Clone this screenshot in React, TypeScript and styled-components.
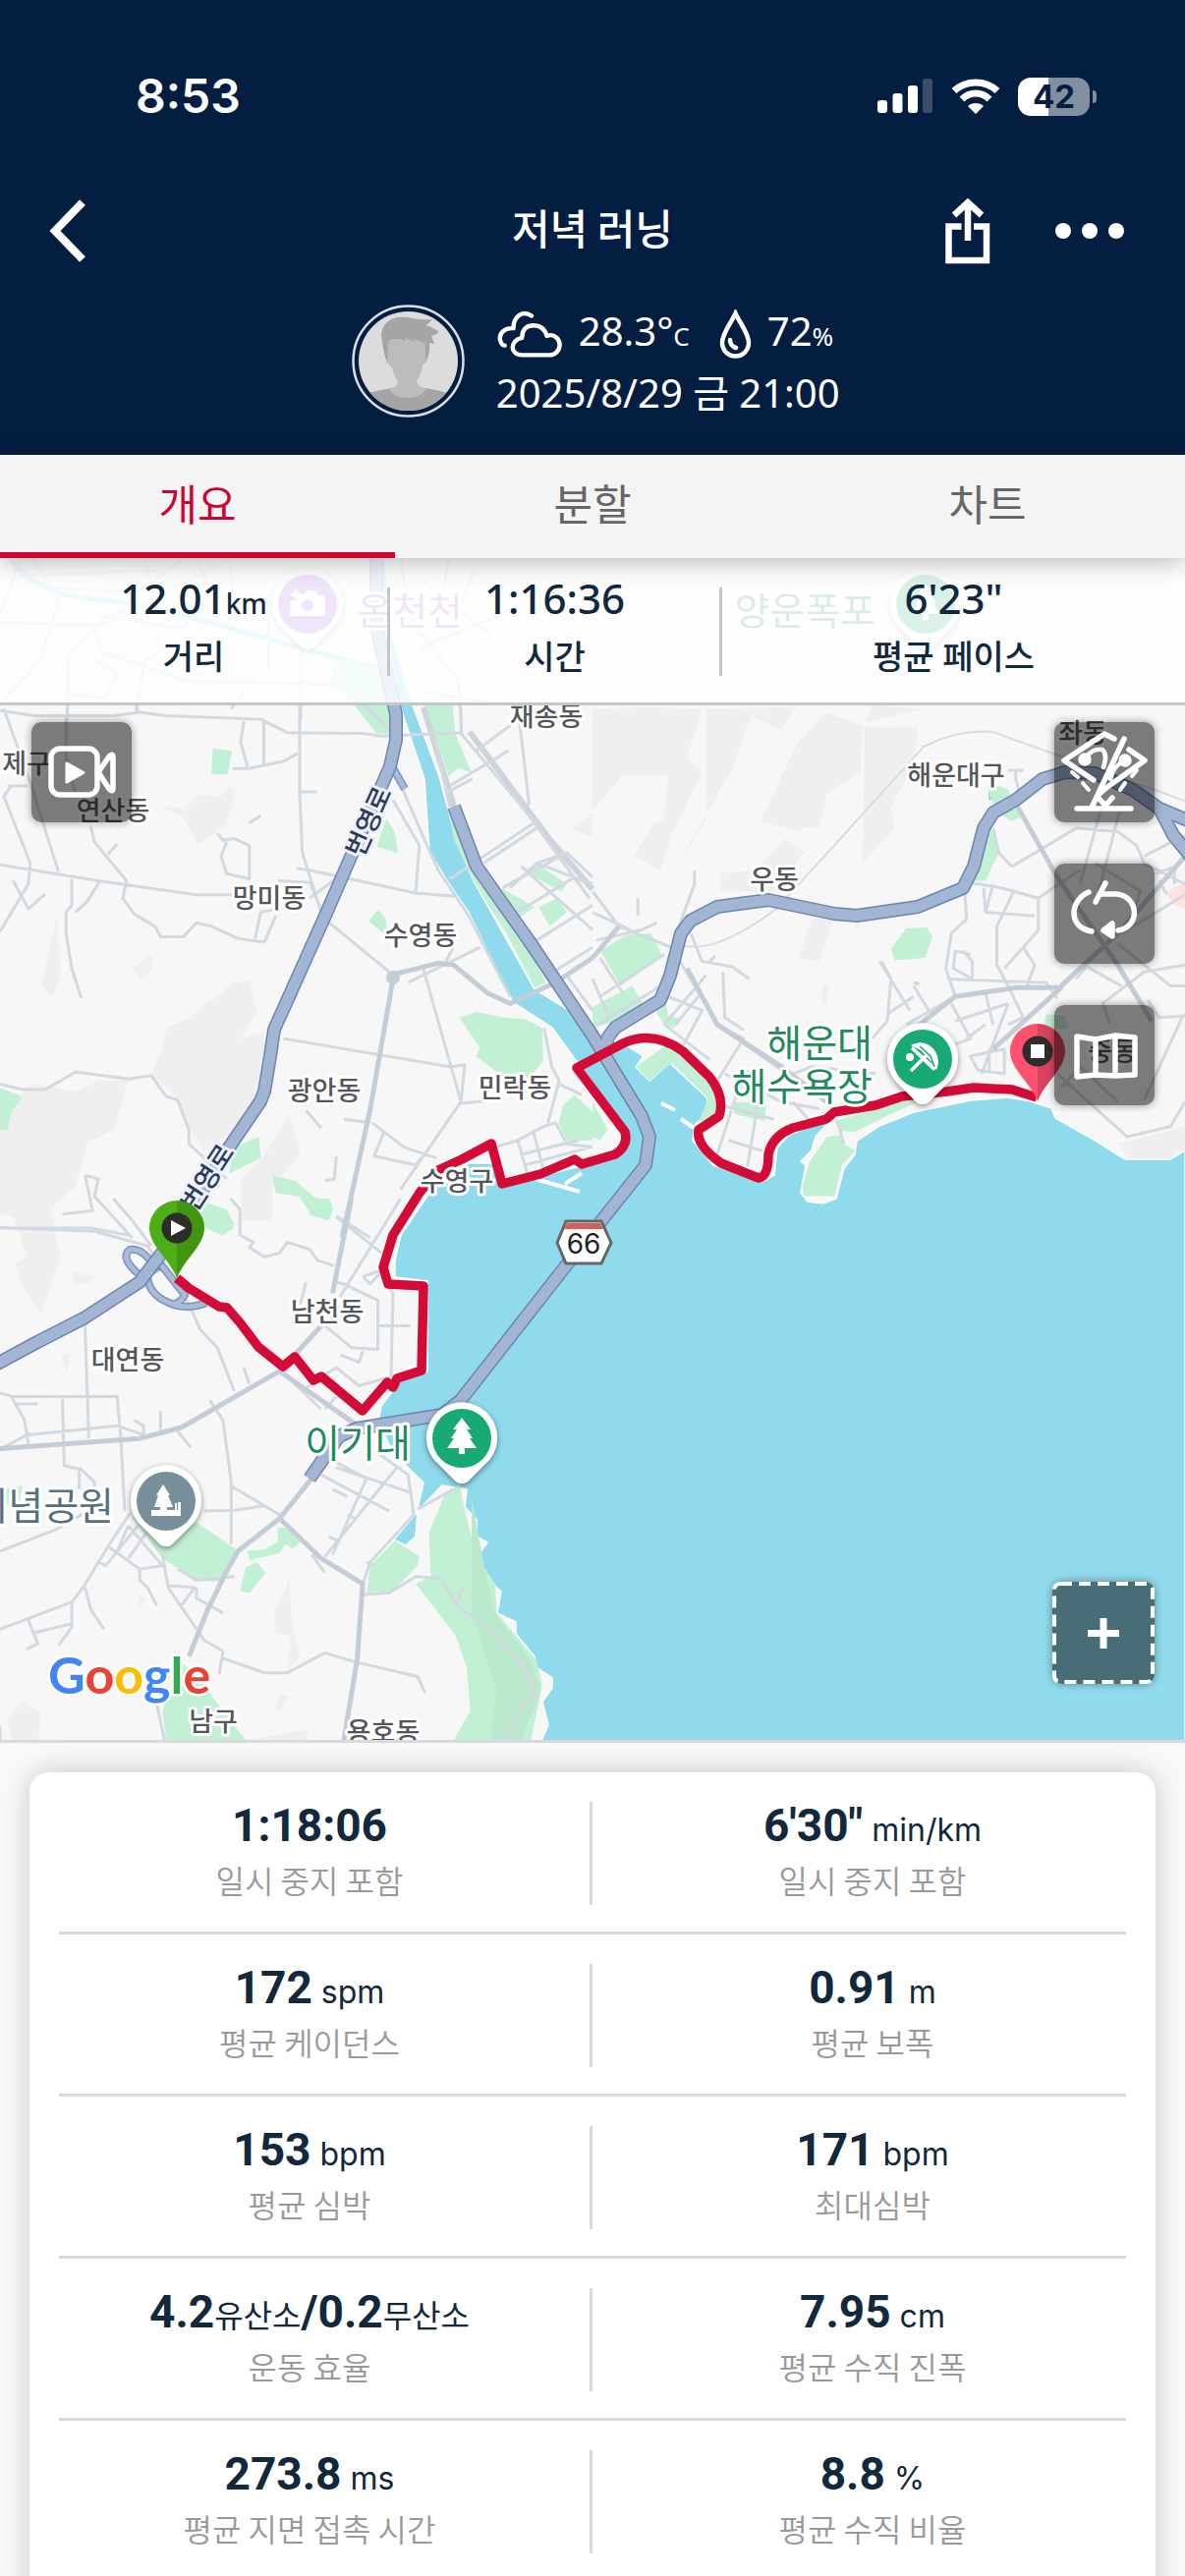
import React from "react";
import styled, { createGlobalStyle, css } from "styled-components";

const GlobalStyle = createGlobalStyle`
  *, *::before, *::after { box-sizing: border-box; }
  body {
    margin: 0;
    background: #f9f9f9;
    color: #12283c;
    font-family: "Noto Sans", "Noto Sans CJK KR", sans-serif;
  }
  button { font: inherit; color: inherit; border: 0; padding: 0; background: none; cursor: pointer; }
  h1, dl, dt, dd, p { margin: 0; font-weight: inherit; font-size: inherit; }
`;

const Screen = styled.div`
  display: flex;
  flex-direction: column;
  height: 100vh;
  overflow: hidden;
`;

/* ---------- header ---------- */

const Header = styled.header`
  flex: none;
  background: #041e42;
  color: #fff;
  padding-bottom: 38px;
`;

const StatusBar = styled.div`
  display: flex;
  align-items: center;
  justify-content: space-between;
  padding: 78px 90px 0 138px;
  height: 118px;
`;

const Clock = styled.time`
  font: 600 48px/40px Inter, sans-serif;
`;

const StatusIcons = styled.div`
  display: flex;
  align-items: center;
  gap: 18px;
`;

const Battery = styled.div`
  display: flex;
  align-items: center;
  gap: 3px;
`;

const BatteryBody = styled.div`
  width: 73px;
  height: 39px;
  border-radius: 13px;
  background: linear-gradient(90deg, #fff 42%, #828fa1 42%);
  color: #041e42;
  font: 700 33px/39px Inter, sans-serif;
  text-align: center;
`;

const BatteryCap = styled.div`
  width: 4px;
  height: 13px;
  border-radius: 0 6px 6px 0;
  background: #828fa1;
`;

const NavBar = styled.nav`
  display: grid;
  grid-template-columns: 1fr auto 1fr;
  align-items: center;
  height: 100px;
  margin-top: 67px;
  padding: 0 50px;
`;

const Title = styled.h1`
  font: 500 42px/60px "Noto Sans CJK KR", sans-serif;
  padding-bottom: 8px;
`;

const NavActions = styled.div`
  display: flex;
  justify-content: flex-end;
  align-items: center;
  gap: 66px;
  padding-right: 12px;
`;

const IconButton = styled.button`
  display: flex;
  justify-self: start;
`;

const Meta = styled.div`
  display: flex;
  justify-content: center;
  align-items: center;
  gap: 32px;
  height: 115px;
  margin-top: 25px;
  padding-left: 14px;
`;

const MetaLines = styled.div`
  display: flex;
  flex-direction: column;
  font-size: 40px;
  line-height: 60px;
  padding-top: 4px;
`;

const Weather = styled.div`
  display: flex;
  align-items: center;
  gap: 16px;
  height: 60px;
`;

const Reading = styled.span`
  margin-right: 14px;
  small { font-size: 26px; }
`;

const Started = styled.time`
  display: block;
  height: 60px;
`;

/* ---------- tabs ---------- */

const Tabs = styled.div`
  flex: none;
  display: flex;
  position: relative;
  z-index: 2;
  background: #f4f4f4;
  box-shadow: 0 4px 24px rgba(0, 0, 0, 0.28);
`;

const Tab = styled.button<{ $active?: boolean }>`
  flex: 1;
  height: 105px;
  padding-bottom: 4px;
  font: 400 43px/60px "Noto Sans CJK KR", sans-serif;
  color: ${(p) => (p.$active ? "#cc0633" : "#666")};
  border-bottom: 6px solid ${(p) => (p.$active ? "#cc0633" : "transparent")};
`;

/* ---------- map ---------- */

const MapArea = styled.section`
  flex: none;
  position: relative;
  aspect-ratio: 1206 / 1206;
  overflow: hidden;
  border-bottom: 3px solid #d8dadb;
`;

const MapSvg = styled.svg`
  display: block;
  width: 100%;
  height: 100%;
`;

const Summary = styled.dl`
  position: absolute;
  inset: 0 0 auto;
  display: grid;
  grid-template-columns: 197fr 169fr 237fr;
  padding: 30px 0 27px;
  background: rgba(255, 255, 255, 0.84);
  border-bottom: 3px solid #c6c6c6;
`;

const SummaryItem = styled.div`
  display: flex;
  flex-direction: column-reverse;
  justify-content: flex-end;
  align-items: center;
  height: 90px;
  & + & { border-left: 3px solid #c6c6c6; }
  dt { font-size: 34px; line-height: 44px; font-weight: 500; margin-top: 14px; }
  dd { height: 46px; font-size: 42px; line-height: 46px; font-weight: 500; margin-top: -12px; }
  small { font-size: 28px; }
`;

const MapTools = styled.div<{ $side: "left" | "right" }>`
  position: absolute;
  top: 167px;
  ${(p) => (p.$side === "left" ? css`left: 32px;` : css`right: 31px;`)}
  display: flex;
  flex-direction: column;
  gap: 42px;
`;

const MapButton = styled.button`
  display: block;
  width: 102px;
  height: 102px;
  border-radius: 10px;
  background: rgba(0, 0, 0, 0.5);
  box-shadow: 0 0 8px rgba(0, 0, 0, 0.4);
`;

const AddButton = styled(MapButton)`
  position: absolute;
  right: 31px;
  bottom: 57px;
  width: 104px;
  height: 104px;
`;

/* ---------- statistics ---------- */

const Card = styled.section`
  flex: none;
  margin: 30px 30px 0;
  padding-bottom: 30px;
  border-radius: 20px;
  background: #fff;
  box-shadow: 0 0 30px rgba(0, 0, 0, 0.2);
`;

const StatRow = styled.dl`
  display: grid;
  grid-template-columns: 1fr 1fr;
  margin: 0 30px;
  padding: 30px 0 27px;
  & + & { border-top: 3px solid #d9d9d9; }
`;

const Stat = styled.div`
  display: flex;
  flex-direction: column-reverse;
  justify-content: flex-end;
  align-items: center;
  height: 105px;
  &:first-child { padding-right: 30px; border-right: 3px solid #d9d9d9; }
  &:last-child { padding-left: 27px; }
  dt { font: 350 32px/44px "Noto Sans CJK KR", sans-serif; margin-top: 9px; color: #999; }
  dd { height: 48px; font: 700 46px/48px Roboto, "Noto Sans CJK KR", sans-serif; }
`;

const Unit = styled.small`
  font: 400 32px/48px Inter, "Noto Sans CJK KR", sans-serif;
`;

/* ---------- icons ---------- */

const Signal = () => (
  <svg width="57" height="36" viewBox="0 0 57 36" fill="#fff" aria-hidden="true">
    <rect x="0" y="22" width="10" height="13" rx="3" />
    <rect x="15.500" y="15" width="10" height="20" rx="3" />
    <rect x="31" y="7" width="10" height="28" rx="3" />
    <rect x="46" y="0" width="10" height="35" rx="3" opacity=".22" />
  </svg>
);

const Wifi = () => (
  <svg width="50" height="36" viewBox="0 0 50 36" aria-hidden="true">
    <g fill="none" stroke="#fff" strokeWidth="7">
      <path d="M3 12.500C15 1 35 1 47 12.500" />
      <path d="M11 21C19 13 31 13 39 21" />
    </g>
    <path d="M17 28C21 24 29 24 33 28L25 36Z" fill="#fff" />
  </svg>
);

const Share = () => (
  <svg width="46" height="67" viewBox="0 0 46 67" fill="none" stroke="#fff" strokeWidth="6.500" aria-hidden="true">
    <path d="M16.500 28.500H3.500V63H42V28.500H29" />
    <path d="M23 43V4M9 17L23 4L37 17" />
  </svg>
);

const Dots = () => (
  <svg width="70" height="16" viewBox="0 0 70 16" fill="#fff" aria-hidden="true">
    <circle cx="8" cy="8" r="8" />
    <circle cx="35" cy="8" r="8" />
    <circle cx="62" cy="8" r="8" />
  </svg>
);

const Back = () => (
  <svg width="38" height="64" viewBox="0 0 38 64" fill="none" stroke="#fff" strokeWidth="8" aria-hidden="true">
    <path d="M34 3L6 32L34 61" />
  </svg>
);

const Cloud = () => (
  <svg width="68" height="50" viewBox="0 0 70 50" fill="none" stroke="#fff" strokeWidth="4.500" strokeLinecap="round" strokeLinejoin="round" aria-hidden="true">
    <path d="M37 6C29 0 18 5 18 19C8 18 3 25 4 31C5 35 7 37 9 37" />
    <path d="M27 47C14 47 14 31 27 29C27 19 33 16 39 16C47 16 51 20 53 27C60 24 66.500 30 66.500 36C66.500 43 61 47 56 47Z" />
  </svg>
);

const Drop = () => (
  <svg width="33" height="50" viewBox="0 0 33 50" fill="none" stroke="#fff" strokeWidth="4.500" strokeLinecap="round" aria-hidden="true">
    <path d="M16.500 4C21 14 30 24 30 34A13.500 13.500 0 0 1 3 34C3 24 12 14 16.500 4Z" />
    <path d="M11 31Q11 37 17 39" />
  </svg>
);

const Avatar = () => (
  <svg width="115" height="115" viewBox="0 0 115 115" role="img" aria-label="프로필">
    <clipPath id="face"><circle cx="57.500" cy="57.500" r="50.500" /></clipPath>
    <circle cx="57.500" cy="57.500" r="56" fill="none" stroke="#dcdfe6" strokeWidth="2.500" />
    <g clipPath="url(#face)">
      <rect width="115" height="115" fill="#dcdcdc" />
      <path d="M0 115V95Q20 88 47 84H68Q95 88 115 95V115Z" fill="#a5a5a5" />
      <path d="M38 86Q47 84 47 76H66Q66 84 76 86Q70 95 57 95Q44 95 38 86Z" fill="#bcbcbc" />
      <path d="M36 59Q32 50 30 30Q31 20 40 15Q48 11 62 14Q72 16 82 15Q79 19 75 21Q84 24 89 28Q85 31 81 32L84 40L79 39Q80 50 75 59Z" fill="#a5a5a5" />
      <path d="M37 37Q48 32 55 38L54 34L64 38L63 35Q72 38 75 40L75 58L72 62Q70 76 62 82H52Q43 76 41 64Q36 60 36 55Z" fill="#bcbcbc" />
    </g>
  </svg>
);

const ToolIcon = ({ children }: { children: React.ReactNode }) => (
  <svg width="102" height="102" viewBox="0 0 102 102" fill="none" stroke="#fff" strokeWidth="5.500" strokeLinecap="round" strokeLinejoin="round" aria-hidden="true">
    {children}
  </svg>
);

const VideoIcon = () => (
  <ToolIcon>
    <rect x="20" y="27" width="47" height="47" rx="9" />
    <path d="M36 42V61L53 51.500Z" fill="#fff" strokeWidth="3" />
    <path d="M68 51L79 35Q83 31 83 36V67Q83 72 79 68Z" />
  </ToolIcon>
);

const No3dIcon = () => (
  <ToolIcon>
    <path d="M61 17L51 12L10 39L40 59" />
    <path d="M76 28L92 39L54 66L46 73" />
    <path d="M71 17L38 87M23 88H78M44 76L52 85L59 77" />
    <path d="M29 62L35 69M72 62L67 69M18 51L24 56M84 49L79 55" strokeWidth="4" />
    <path d="M32 36C38 28 44 27 49 28C54 33 52 40 50 46" strokeWidth="4.500" />
    <path d="M72 39Q60 44 57 58" strokeWidth="4.500" />
    <circle cx="31" cy="38" r="4" fill="#fff" />
    <circle cx="72" cy="39" r="4" fill="#fff" />
  </ToolIcon>
);

const LoopIcon = () => (
  <ToolIcon>
    <path d="M35 29C16 37 13 65 38 69" />
    <path d="M52 20L42 39M46 31H64C86 34 88 64 65 68" />
    <path d="M50 68L59 61V74Z" fill="#fff" />
  </ToolIcon>
);

const FoldedMapIcon = () => (
  <ToolIcon>
    <path d="M23 32L42 35L62 31L82 33V71L62 72L42 71L23 73ZM42 35V71M62 31V72" />
  </ToolIcon>
);

const PlusIcon = () => (
  <svg width="104" height="104" viewBox="0 0 104 104" fill="none" stroke="#fff" aria-hidden="true">
    <rect x="2" y="2" width="100" height="100" rx="6" strokeWidth="4" strokeDasharray="12 7" />
    <path d="M52 37V68M36 52.500H68" strokeWidth="7" />
  </svg>
);

/* ---------- map drawing ---------- */

/* The map is stored in sheets, each with its own origin and grid size. */
const sheets = {
  n: "translate(0 560) scale(.33333)",
  nw: "translate(0 700) scale(.38457 .35714)",
  ne: "translate(603 700) scale(.38457 .35714)",
  sw: "translate(0 1220) scale(.38457 .3699)",
};
type SheetName = keyof typeof sheets;

const terrain: Record<SheetName, string> = {
  n: "M490 780L560 815L605 900L690 840L720 730L700 725L670 755L605 745L560 790Z",
  nw: "M440 970L500 940L620 840L660 835L680 920L640 1000L700 980L690 1160L620 1260L540 1320L500 1250L460 1160L400 1100L430 1030ZM110 850L150 650L160 820L140 880ZM350 800L400 755L405 800L375 835ZM20 1200L80 1130L200 1150L260 1120L340 1120L300 1260L230 1300L200 1420L100 1520L0 1500V1220ZM700 1330L765 1220L795 1330L720 1420V1520H640V1400ZM1510 400L1568 360V430Z",
  ne: "M0 60L150 55L290 60L250 200L290 240L210 420L180 520L110 480L160 390L190 370L200 250L80 250L0 350ZM300 60L540 55L500 120L420 80L370 230L280 400L220 510L300 380ZM540 160L620 70L715 110L710 240L620 300L600 400L560 400L540 410L445 380ZM720 110L860 110L850 220L790 340L800 400L715 500ZM340 530L430 520L510 430L560 470L480 580H340ZM740 50L880 60L720 100ZM580 660L640 650L600 780L545 770ZM610 845L628 850L620 905L605 900ZM1390 1300L1568 1250V1320L1520 1343H1420Z",
  sw: "M20 0L130 10L160 160L110 320L60 240L40 180L70 160ZM160 430L182 430L178 480ZM190 200L250 215L240 230L195 240ZM725 1140L765 1050L775 1190L795 1260L760 1300L770 1205L730 1195ZM365 1090L388 1100L370 1125ZM740 1360L765 1370L740 1410L728 1405ZM20 1430L60 1380L110 1420L100 1490H30ZM650 1490L815 1460V1490Z",
};

const parks: Record<SheetName, string> = {
  n: "M1020 330L1180 360L1205 470L1190 560H1150L1080 470L1010 400ZM1290 450L1380 455L1390 560L1440 680L1400 665L1370 690L1340 600L1310 560ZM650 606L708 612L695 685H645ZM1180 820L1205 860L1215 925L1150 905Z",
  nw: "M1215 940L1260 925L1340 940L1390 945L1435 970L1437 1065L1390 1125L1320 1100L1260 1050L1270 1025ZM975 665L1000 632L1020 655L1025 710ZM1190 350L1320 580L1445 840L1415 855L1340 700L1250 545L1200 430ZM1325 570L1415 625L1375 655ZM1420 500L1500 560L1485 582L1390 525ZM1425 625L1475 600L1500 640L1455 680ZM620 1310L685 1280L690 1340L605 1385ZM720 1390L780 1405L830 1450L880 1470L870 1515L825 1500L790 1450L730 1440ZM540 1470L600 1490L620 1540L590 1560L520 1530ZM1490 1190L1520 1160L1568 1210V1290L1500 1290L1478 1240ZM0 1140L60 1165L30 1210L20 1260H0Z",
  ne: "M20 750L90 705L155 700L185 765L75 850ZM0 910L105 850L135 900L60 950L0 970ZM150 895L195 900L200 935L235 945L215 970L190 960ZM830 685L885 683L900 710L880 770L800 777L790 745ZM1050 270L1100 290L1115 320L1060 330L1045 290ZM1055 400L1075 470L1040 550L1005 550ZM1090 350L1135 345L1130 370L1110 380L1085 365ZM0 1180L40 1260L20 1290L0 1280ZM115 1080L200 1015L240 1045L310 1110L335 1215L280 1240L305 1170L210 1070L150 1120ZM375 1180L460 1185L455 1235L375 1215ZM640 1235L760 1200L830 1170L860 1180L760 1230L690 1268L655 1260ZM620 1280L660 1275L665 1300L695 1320L660 1360L640 1450L560 1448L555 1420L575 1350ZM1200 930L1250 935L1260 970L1225 975L1190 985Z",
  sw: "M520 890L625 965L590 1055L520 1050L430 990L345 870L380 900ZM655 970L700 965L735 945V905H760L795 945L775 965L755 950L740 975L660 995ZM650 1015L680 1000L703 1030L660 1085L635 1080ZM1045 940L1110 985L1105 1010L1040 1080L970 1085L980 1010ZM1215 785L1235 880L1260 980L1310 1060L1315 1140L1420 1270L1435 1340L1405 1490H1200L1245 1410L1235 1290L1205 1200L1100 1060L1140 1040L1135 920L1175 820ZM430 1410L480 1280L520 1300L575 1390L650 1490H440ZM810 0H870L882 30L870 60L820 45ZM545 10L600 30L620 70L590 95L540 80ZM0 800L60 790L50 840H0Z",
};

const minorRoads: Record<SheetName, string> = {
  n: "M0 220L300 230L700 30M60 30L0 200M100 24L180 160L120 340L0 470M300 230L210 320L205 520M290 230L310 310L570 400L1050 410L1200 560M440 24L480 160L300 210M600 24L640 130L900 180M470 260L500 300L440 340L415 490M720 210L700 24M820 180V360M918 300V520M1220 24L1260 220L1400 400L1410 560M1300 100L1500 260M1340 440L1520 470M1280 300L1568 180M750 430L705 485M640 130L560 240L310 200M60 80L500 60M100 110L420 130L560 24M210 440L320 450L360 380L280 330M1370 24L1340 200M1450 60L1400 180",
  nw: "M0 65L90 80H300L370 70L440 80L690 90L760 128L960 130L1010 138L1220 128M175 80V200L200 300M10 60L80 270L155 525M363 50V70M645 95L637 155L655 225M698 95V222M615 230H660L750 210L787 188M793 50V300L800 470L850 640M795 297H838M240 395L250 440L335 550L325 600L355 645L410 680L425 710H485L520 670L560 680L630 715L700 725L730 650M285 475L310 445M660 385L690 365M575 415L590 435L620 430L660 450V545L600 530L585 480L600 440M0 505L260 550L520 590H615M20 280H70L30 280L10 310L80 500L75 560L0 695M190 545V620L175 640V700L190 800L215 885M265 550L230 610L200 640M120 588L75 630L35 550M675 715L690 640L735 630M735 550L820 555M785 515L820 520L1100 585L1210 595M820 555L860 660L1030 810M925 515L820 600M1050 250L1130 450L1160 520L1240 650L1350 880M1110 450L1100 580M1040 320L1110 450M1220 55V130L1390 350L1560 600M1150 140L1190 340M1370 50L1400 330L1380 345M1345 180L1190 280M1420 380L1190 545M1250 260L1180 300M1260 180L1360 100M1280 500L1420 400M1330 570L1500 470M1370 640L1520 540M1420 720L1568 620M1450 820L1568 740M1350 570L1420 500L1568 560M1380 510L1568 690M1420 500L1500 470L1568 540M1080 840L1270 740M1120 800L1220 1180L1230 1075L1190 1080L750 1000M1220 1180L1060 1430M1220 1185L1300 1175M1200 740L1180 780M985 1240L1070 1310L1155 1340M1015 1270L990 1335L1100 1360L1115 1340M910 1230L980 1240M810 1205L850 1255M890 1335L885 1400L860 1405M890 1505L980 1568M0 1130L60 1145H120L200 1095L340 1115L400 1105L440 1165L470 1175L500 1260V1300L600 1400M0 1540H240L340 1560M225 1390L260 1400L250 1450L350 1568M225 1390L245 1490L165 1500M1310 1310L1370 1290L1440 1250L1470 1240L1500 1300L1568 1310M1370 1290L1400 1400M1410 1260L1440 1380M1380 1330L1530 1290M1390 1360L1560 1310M1440 970L1460 1080L1480 1120L1450 1240M1480 1130L1540 1160M1500 900L1568 980M1500 820L1568 920",
  ne: "M0 580L70 680L210 740L330 960L500 1090M0 640L100 690M10 720L130 690L170 670M0 830L40 930M20 770L80 870M120 600V650M270 520V560L225 690M260 700L290 780L370 795L415 830M310 780L325 765M345 810L350 940L400 975M200 880L290 920L240 1020M300 820L190 960L310 1060M280 880L220 960M210 830L0 970M190 760L20 880M330 1120L400 1000L330 960M350 1100L500 1180L600 1200M410 1090L375 1180L330 1330M340 1190L480 1230M360 1290L450 1320M440 1170L410 1365M510 1110L580 1080L750 1100M650 1240L665 1300M530 1180L580 1240M765 780L790 830L780 950L740 1000M760 780L840 920M850 850L890 920M850 840L865 845M780 930L850 880M830 960L960 880M940 830L1060 835L1200 840L1230 885M1000 760L960 750L955 800L1005 830V780L980 750M1000 555L1080 570L1180 600L1220 570L1290 520M985 580L990 660L950 700L935 800L960 880M1060 560L1040 640L1170 650M1115 580L1070 680V790L1100 850M1180 600V690L1140 740L1090 800M1040 640L1035 570M1140 740L1170 790L1150 850M1110 510L1280 400L1390 410L1440 450L1460 500L1568 560M1060 400L1075 470L1110 510M1350 330L1290 560M1400 330L1340 580M1120 235V260L1130 300M1100 235H1140M1460 480L1568 420M1400 700L1568 590M1390 730L1530 850L1568 850M1330 500L1450 580L1420 680M1370 960L1350 900L1460 810L1568 790M1560 940L1460 1175M1470 890L1500 940L1568 935M950 900L1000 1000L950 1020M960 950L1100 900M990 1000L1040 960M1040 870L1060 960M1100 850L1140 940L1100 960M1000 1050L1090 1030V1100L1020 1090ZM1050 1030V1100M1230 1100L1415 1280L1530 1250L1568 1180M1240 1140L1290 1080L1390 1180M1490 530L1540 510V560M1500 550L1520 590M1300 790L1400 850M1280 830L1310 790M1030 1100L1100 900",
  sw: "M0 80L250 90L390 130L500 290L530 360L575 410L620 530M610 0L635 30V100L670 120L660 135L700 160L740 150L760 120L820 140L840 170L885 185M300 0L350 60L400 130M225 350L235 660M0 535L35 545H310L320 660L330 860M30 545L65 610L75 675M40 565H100M165 550L170 735L210 745V800M75 650L310 625L380 650M425 585V640M355 610L380 625V650M80 645L0 690M470 640L505 685M645 465L660 510M555 555L590 610L612 780V950M610 790L740 870M540 860L620 858L700 845M210 740L250 780V800M0 970L150 910L230 860M345 865L290 950L220 1070L190 1110L0 1185M365 900L280 1010L260 1000M340 900L310 970M400 900L340 990M290 960L370 1020L430 1010L340 900M370 1020V1050L390 1070L415 1120M430 980L445 1070L540 1215L590 1245L580 1310M445 1065L515 1070L480 1120M225 1070L240 1130L275 1185M190 1110V1180L155 1230M75 1160L100 1225L70 1240M90 1195L190 1170M520 1070V1100L590 1140M470 1020L520 1050L620 1040M740 470L850 580M800 530L850 490L890 465L950 515L1035 490M900 430L950 450L960 420M860 350L930 410L1000 415V350H1085M890 230L910 235L1000 280V350M960 215L1000 200L1040 260L1035 490M810 230L795 290M1010 200L980 235L960 215M890 545L860 580M860 560L900 590M900 270L1060 0M890 50L1010 150M880 720L970 770L880 980M1050 740L860 985M1000 700L1080 760L1095 870L980 1000L960 1060M850 760L1030 860M890 740L1090 810M880 800L920 820M920 870L940 880M870 930L900 945M970 1000L990 1010M860 1030L825 980M1105 855L1200 800M960 1090L1030 1085L1100 1040L1165 1045L1210 1120L1310 1200L1390 1290L1415 1360L1370 1410L1360 1450L1325 1490M1210 1110L1225 1070M590 1265L700 1305H760L860 1250L940 1275L1105 1315L1125 1360M415 1390L435 1490M0 1450V1490",
};

const majorRoads: Record<SheetName, string> = {
  n: "",
  nw: "M1030 820L1160 785L1200 790L1290 870L1350 900L1470 840L1568 770M1040 830L980 1200L905 1568",
  ne: "M0 770L70 680M250 800L330 960L500 1080L620 1180M1120 330L1230 540L1390 790L1480 950M830 990L960 880L1120 855H1240L1060 1030M1240 850L1400 690L1568 480",
  sw: "M930 0L880 260M850 350L740 475L480 630L370 660L0 688M740 475L940 620M825 770L740 880L630 970L600 1025L550 1130L500 1260M740 880L850 990L960 1060L945 1270L910 1490",
};

const sheetNames = Object.keys(sheets) as SheetName[];

const sea =
  "M433 1220L408 1257L402 1283V1300L435 1304V1396L408 1405L388 1431L385 1446L400 1479L431 1509L424 1540L400 1568L379 1592L402 1568L413 1573L423 1564L425 1538L450 1512L475 1516L473 1534L485 1547V1564L496 1570L488 1581L494 1605L510 1620L506 1642L525 1651V1663L544 1686L546 1697L562 1708V1718L552 1732L558 1756L550 1774H1206V1171L1191 1180H1145L1115 1161L1074 1138L1070 1128L1049 1121L1026 1117L988 1120L930 1132L895 1146L872 1161L870 1175L859 1189L851 1220L838 1225L822 1223L815 1214L820 1186L815 1182L826 1171L830 1157L849 1137L803 1155L791 1168L788 1196L776 1203L726 1186L705 1161L707 1145L720 1134V1118L682 1082L661 1100L647 1086L655 1075L634 1062H603L577 1027L544 1007L512 950L481 895L465 857L447 790L420 718L400 650L392 568H386L396 660L407 718L432 793L437 867L454 895L477 929L515 1007L523 1021L562 1046L588 1082L603 1102L636 1152V1166L603 1184L550 1197L512 1207L504 1184H477L446 1200Z";

const highways = [
  "M383 560V637L393 683L403 727V753L397 780L331 932L279 1048L275 1075L269 1111L265 1121L231 1171L175 1262L142 1305L85 1342L38 1366L-10 1392",
  "M462 821L485 882L538 957L603 1054L653 1136L661 1157L657 1186L577 1287L469 1425L450 1440L363 1454L345 1462L315 1505",
  "M618 1070V1057L626 1046L672 1018L682 993L693 950L703 937L730 923L782 916L849 930L872 932L934 923L980 904L991 882L1001 843L1011 827L1034 814L1061 793L1084 786L1114 787L1153 804L1180 823L1216 838",
  "M1180 823L1194 850L1212 872",
];

const ramps = "M160 1295Q148 1270 132 1272Q122 1280 140 1296M150 1300Q152 1318 172 1326Q190 1334 210 1326M162 1285L188 1318Q184 1326 176 1328M399 780L412 803";

const route =
  "M180 1301L192 1311L223 1330L231 1331L244 1346L263 1371L288 1391L300 1381L319 1405L327 1401L369 1436L394 1407L400 1412L404 1403L429 1395L431 1309L395 1307L390 1290L400 1257L427 1214L446 1191L470 1180L500 1164L511 1205L550 1195L585 1180L592 1185L626 1175Q640 1166 636 1152L587 1087L634 1062Q665 1048 695 1070L722 1096Q738 1116 732 1136L711 1150Q708 1166 734 1184L772 1199Q782 1198 782 1175Q786 1156 807 1148L841 1139L849 1132L891 1125L918 1116L964 1111L991 1107L1030 1109L1055 1117";

const areaLabels: [string, number, number][] = [
  ["재송동", 556, 729], ["제구", 27, 777], ["연산동", 115, 825], ["망미동", 274, 914],
  ["수영동", 428, 952], ["광안동", 330, 1110], ["민락동", 524, 1107], ["수영구", 465, 1202],
  ["남천동", 333, 1335], ["대연동", 130, 1384], ["남구", 217, 1752], ["용호동", 390, 1763],
  ["우동", 788, 895], ["해운대구", 973, 789], ["좌동", 1102, 746], ["중동", 1132, 1070],
];

const placeLabels: [string[], number, number, string][] = [
  [["온천천"], 471, 622, "#9e62d8"],
  [["양운폭포"], 891, 622, "#1f8a5e"],
  [["해운대", "해수욕장"], 888, 1062, "#1f8a5e"],
  [["이기대"], 418, 1469, "#1f8a5e"],
  [["기념공원"], 116, 1533, "#58707f"],
];

const AreaLabel = styled.text`
  font: 500 27px "Noto Sans CJK KR", sans-serif;
  text-anchor: middle;
  fill: #55565a;
  stroke: #fff;
  stroke-width: 6px;
  stroke-linejoin: round;
  paint-order: stroke;
`;

const RoadLabel = styled(AreaLabel)`
  fill: #2b3b5c;
  stroke: #eef1f8;
`;

const PlaceLabel = styled(AreaLabel)`
  font-size: 39px;
  font-weight: 400;
  text-anchor: end;
  fill: ${(p) => p.color};
`;

const ShieldText = styled.text`
  font: 400 28px Inter, sans-serif;
  text-anchor: middle;
  fill: #222;
`;

const Wordmark = styled.text`
  font: 700 52px Lato, sans-serif;
  stroke: #fff;
  stroke-width: 5px;
  stroke-linejoin: round;
  paint-order: stroke;
`;

const Pin = ({ x, y, color, children }: { x: number; y: number; color: string; children: React.ReactNode }) => (
  <g transform={`translate(${x} ${y})`}>
    <path d="M0 46Q5 46 9 41L28 22A36 36 0 1 0 -28 22L-9 41Q-5 46 0 46Z" fill="#fff" filter="url(#pinShadow)" />
    <circle r="30" fill={color} />
    <g fill="#fff">{children}</g>
  </g>
);

const tree = "M0 -21L9 -9H5L11 0H8L15 10H3V16H-3V10H-15L-8 0H-11L-5 -9H-9Z";

const RoutePin = ({ x, y, left, right, children }: { x: number; y: number; left: string; right: string; children: React.ReactNode }) => (
  <g transform={`translate(${x} ${y})`}>
    <path d="M0 51C-7 32 -28 18 -28 0A28 28 0 0 1 0 -28Z" fill={left} />
    <path d="M0 51C7 32 28 18 28 0A28 28 0 0 0 0 -28Z" fill={right} />
    <circle r="15.500" fill="#2d2d2d" />
    {children}
  </g>
);

const Sheets = ({ data, ...rest }: { data: Record<SheetName, string> } & React.SVGProps<SVGGElement>) => (
  <g {...rest}>
    {sheetNames.map((name) => (
      <path key={name} d={data[name]} transform={sheets[name]} vectorEffect="non-scaling-stroke" />
    ))}
  </g>
);

const RouteMap = () => (
  <MapSvg viewBox="0 568 1206 1203" preserveAspectRatio="xMidYMid slice" role="img" aria-label="러닝 경로 지도">
    <defs>
      <filter id="pinShadow" x="-30%" y="-30%" width="160%" height="160%">
        <feDropShadow dx="0" dy="2" stdDeviation="3" floodOpacity=".45" />
      </filter>
    </defs>
    <rect y="568" width="1206" height="1206" fill="#f7f7f7" />
    <Sheets data={terrain} fill="#efefef" />
    <path d="M1186 908L1206 898V925L1196 921Z" fill="#fde3e1" />
    <path d={sea} fill="#90daee" stroke="#fff" strokeWidth="1.500" />
    <path d="M10 570C60 625 110 602 170 622C240 640 320 665 393 682" fill="none" stroke="#90daee" strokeWidth="5" />
    <path d="M1006 800L1024 804L1018 815L1006 814ZM208 1565L222 1572L214 1576Z" fill="#90daee" />
    <Sheets data={parks} fill="#c2f0d5" />
    <path d="M480 1526L492 1590L502 1640L540 1690L550 1720L530 1774H500L505 1720L480 1640Z" fill="#b9e8cc" />
    <path d="M693 1139L706 1148M673 1123L687 1130M545 1200L590 1213M575 1205L592 1194" stroke="#fff" strokeWidth="4" fill="none" />
    <path d="M693 962Q728 972 790 925L845 865L940 760Q975 742 1010 745L1206 815" fill="none" stroke="#d9dbe0" strokeWidth="2" />
    <path d="M431 720L462 821M478 745L560 855L603 905" fill="none" stroke="#cfd3dc" strokeWidth="6" />
    <Sheets data={minorRoads} fill="none" stroke="#d2d9e0" strokeWidth="3" strokeLinejoin="round" />
    <Sheets data={majorRoads} fill="none" stroke="#c4cdd7" strokeWidth="5" strokeLinejoin="round" />
    <circle cx="400" cy="995" r="7" fill="#c4cdd7" />
    <g fill="none" strokeLinejoin="round">
      <path d={ramps} stroke="#7d92bb" strokeWidth="8" />
      <path d={ramps} stroke="#a9bbd6" strokeWidth="5" />
      {highways.map((d) => <path key={d} d={d} stroke="#6d84b2" strokeWidth="14" />)}
      {highways.map((d) => <path key={d} d={d} stroke="#a2b5d2" strokeWidth="11" />)}
    </g>
    <path d={route} fill="none" stroke="#d30c37" strokeWidth="9.500" strokeLinejoin="round" />

    {areaLabels.map(([name, x, y]) => <AreaLabel key={name} x={x} y={y + 10}>{name}</AreaLabel>)}
    <RoadLabel transform="translate(384 840) rotate(-66)">번영로</RoadLabel>
    <RoadLabel transform="translate(219 1204) rotate(-57)">번영로</RoadLabel>
    {placeLabels.map(([lines, x, y, color]) => (
      <PlaceLabel key={lines[0]} y={y + 14} color={color}>
        {lines.map((line, i) => <tspan key={line} x={x} dy={i * 44}>{line}</tspan>)}
      </PlaceLabel>
    ))}

    <path d="M576 1243H612L622 1265L612 1286H576L567 1265Z" fill="#fff" stroke="#666" strokeWidth="3" />
    <path d="M577 1245H611L614 1251H574Z" fill="#d35f5f" />
    <ShieldText x="594" y="1276">66</ShieldText>

    <Pin x={313} y={615} color="#a45ce6">
      <path d="M-18 -4H-10V-10H-4L0 -14H8L11 -9H18V12H-18Z" />
      <path d="M-12 -15V-5M-17 -10H-7" stroke="#fff" strokeWidth="3" />
      <circle r="6" cy="1" fill="#a45ce6" />
    </Pin>
    <Pin x={942} y={615} color="#19a974"><path d={tree} /></Pin>
    <Pin x={470} y={1464} color="#19a974"><path d={tree} /></Pin>
    <Pin x={169} y={1528} color="#78909c">
      <path d="M-3 -17L4 -6H2L7 6H1V9H9V2H11V9H12V1H15V15H-15V9H-6V6H-12L-8 -6H-10Z" />
    </Pin>
    <Pin x={939} y={1078} color="#19a974">
      <circle cx="-13" cy="-2" r="4" />
      <path d="M-12 -14C4 -24 22 -6 14 11L9 3L-2 -9ZM-10 -13L14 9L11 12L-12 -10Z" />
      <path d="M4 -4L-12 12" stroke="#fff" strokeWidth="3.500" />
      <path d="M-3 -13L8 -3L12 8" stroke="#19a974" strokeWidth="1.500" fill="none" />
    </Pin>
    <RoutePin x={180} y={1250} left="#4caf16" right="#42960f">
      <path d="M-6 -8V8L9 0Z" fill="#fff" />
    </RoutePin>
    <RoutePin x={1056} y={1070} left="#ff506e" right="#d8445f">
      <rect x="-7" y="-7" width="14" height="14" fill="#fff" />
    </RoutePin>

    <Wordmark x="49" y="1724">
      <tspan fill="#4285f4">G</tspan><tspan fill="#ea4335">o</tspan><tspan fill="#fbbc04">o</tspan>
      <tspan fill="#4285f4">g</tspan><tspan fill="#34a853">l</tspan><tspan fill="#ea4335">e</tspan>
    </Wordmark>
  </MapSvg>
);

/* ---------- data ---------- */

type Value = [string, string?][];

const stats: [Value, string][][] = [
  [[[["1:18:06"]], "일시 중지 포함"], [[["6'30\"", " min/km"]], "일시 중지 포함"]],
  [[[["172", " spm"]], "평균 케이던스"], [[["0.91", " m"]], "평균 보폭"]],
  [[[["153", " bpm"]], "평균 심박"], [[["171", " bpm"]], "최대심박"]],
  [[[["4.2", "유산소"], ["/0.2", "무산소"]], "운동 효율"], [[["7.95", " cm"]], "평균 수직 진폭"]],
  [[[["273.8", " ms"]], "평균 지면 접촉 시간"], [[["8.8", " %"]], "평균 수직 비율"]],
];

export default function App() {
  return (
    <Screen>
      <GlobalStyle />
      <Header>
        <StatusBar>
          <Clock>8:53</Clock>
          <StatusIcons>
            <Signal />
            <Wifi />
            <Battery>
              <BatteryBody>42</BatteryBody>
              <BatteryCap />
            </Battery>
          </StatusIcons>
        </StatusBar>
        <NavBar>
          <IconButton type="button" aria-label="뒤로"><Back /></IconButton>
          <Title>저녁 러닝</Title>
          <NavActions>
            <IconButton type="button" aria-label="공유"><Share /></IconButton>
            <IconButton type="button" aria-label="더 보기"><Dots /></IconButton>
          </NavActions>
        </NavBar>
        <Meta>
          <Avatar />
          <MetaLines>
            <Weather>
              <Cloud />
              <Reading>28.3°<small>C</small></Reading>
              <Drop />
              <Reading>72<small>%</small></Reading>
            </Weather>
            <Started>2025/8/29 금 21:00</Started>
          </MetaLines>
        </Meta>
      </Header>

      <Tabs role="tablist">
        <Tab type="button" role="tab" aria-selected="true" $active>개요</Tab>
        <Tab type="button" role="tab" aria-selected="false">분할</Tab>
        <Tab type="button" role="tab" aria-selected="false">차트</Tab>
      </Tabs>

      <MapArea>
        <RouteMap />
        <Summary>
          <SummaryItem><dt>거리</dt><dd>12.01<small>km</small></dd></SummaryItem>
          <SummaryItem><dt>시간</dt><dd>1:16:36</dd></SummaryItem>
          <SummaryItem><dt>평균 페이스</dt><dd>6'23"</dd></SummaryItem>
        </Summary>
        <MapTools $side="left">
          <MapButton type="button" aria-label="동영상"><VideoIcon /></MapButton>
        </MapTools>
        <MapTools $side="right">
          <MapButton type="button" aria-label="거리 표시 끄기"><No3dIcon /></MapButton>
          <MapButton type="button" aria-label="경로 다시 보기"><LoopIcon /></MapButton>
          <MapButton type="button" aria-label="지도 종류"><FoldedMapIcon /></MapButton>
        </MapTools>
        <AddButton type="button" aria-label="추가"><PlusIcon /></AddButton>
      </MapArea>

      <Card>
        {stats.map((row, i) => (
          <StatRow key={i}>
            {row.map(([value, label], j) => (
              <Stat key={j}>
                <dt>{label}</dt>
                <dd>
                  {value.map(([num, unit]) => (
                    <React.Fragment key={num}>{num}{unit && <Unit>{unit}</Unit>}</React.Fragment>
                  ))}
                </dd>
              </Stat>
            ))}
          </StatRow>
        ))}
      </Card>
    </Screen>
  );
}
